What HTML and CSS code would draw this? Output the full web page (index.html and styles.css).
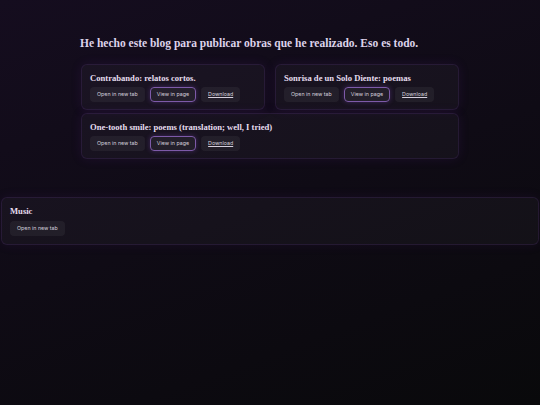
FILE: index.html
```html
<!DOCTYPE html>
<html lang="es">
<head>
<meta charset="utf-8">
<title>Blog</title>
<link rel="stylesheet" href="styles.css">
</head>
<body>
<main class="page">
  <section class="intro">
    <h1 class="intro-title">He hecho este blog para publicar obras que he realizado. Eso es todo.</h1>
    <div class="works">
      <article class="card">
        <h2 class="card-title">Contrabando: relatos cortos.</h2>
        <div class="actions">
          <a class="btn">Open in new tab</a>
          <a class="btn btn-active">View in page</a>
          <a class="btn btn-link">Download</a>
        </div>
      </article>
      <article class="card">
        <h2 class="card-title">Sonrisa de un Solo Diente: poemas</h2>
        <div class="actions">
          <a class="btn">Open in new tab</a>
          <a class="btn btn-active">View in page</a>
          <a class="btn btn-link">Download</a>
        </div>
      </article>
      <article class="card card-wide">
        <h2 class="card-title">One-tooth smile: poems (translation; well, I tried)</h2>
        <div class="actions">
          <a class="btn">Open in new tab</a>
          <a class="btn btn-active">View in page</a>
          <a class="btn btn-link">Download</a>
        </div>
      </article>
    </div>
  </section>
  <section class="music">
    <h2 class="card-title">Music</h2>
    <div class="actions">
      <a class="btn">Open in new tab</a>
    </div>
  </section>
</main>
</body>
</html>
```

FILE: styles.css
```css
html, body {
  margin: 0;
  padding: 0;
  height: 100%;
}
body {
  background: linear-gradient(160deg, #150d1f 0%, #0f0b15 50%, #09090b 100%);
  color: #e6def0;
  font-family: "Liberation Serif", serif;
}
.page {
  padding-top: 36px;
}
.intro {
  width: 380px;
  margin: 0 auto 0 80px;
}
.intro-title {
  margin: 0 0 13px 0;
  font-size: 11.5px;
  font-weight: bold;
  line-height: 15px;
  color: #ddd3ea;
}
.works {
  display: grid;
  grid-template-columns: 184px 184px;
  column-gap: 10px;
  row-gap: 3px;
  margin-left: 1px;
}
.card {
  background: rgba(255, 255, 255, 0.03);
  border: 1px solid rgba(150, 80, 220, 0.12);
  border-radius: 6px;
  padding: 7px 8px 7px 8px;
  box-shadow: 0 0 12px rgba(110, 40, 170, 0.12);
}
.card-wide {
  grid-column: 1 / 3;
}
.card-title {
  margin: 0 0 3px 0;
  font-size: 8.6px;
  font-weight: bold;
  line-height: 12px;
  color: #e6deef;
}
.actions {
  display: flex;
  gap: 5px;
}
.btn {
  display: inline-block;
  white-space: nowrap;
  font-family: "Inter", "Noto Sans", sans-serif;
  font-size: 5.3px;
  line-height: 13px;
  padding: 0 6px;
  border: 1px solid transparent;
  border-radius: 4px;
  background: rgba(255, 255, 255, 0.05);
  color: #d6d0de;
}
.btn-active {
  border-color: #7d5aa8;
  box-shadow: 0 0 5px rgba(140, 80, 210, 0.35);
}
.btn-link {
  text-decoration: underline;
}
.music {
  margin: 38px 1px 0 1px;
  padding: 7px 8px 8px 8px;
  background: rgba(255, 255, 255, 0.03);
  border: 1px solid rgba(150, 80, 220, 0.12);
  border-radius: 6px;
  box-shadow: 0 0 12px rgba(110, 40, 170, 0.1);
}
.music .card-title {
  margin-bottom: 4px;
}
```
